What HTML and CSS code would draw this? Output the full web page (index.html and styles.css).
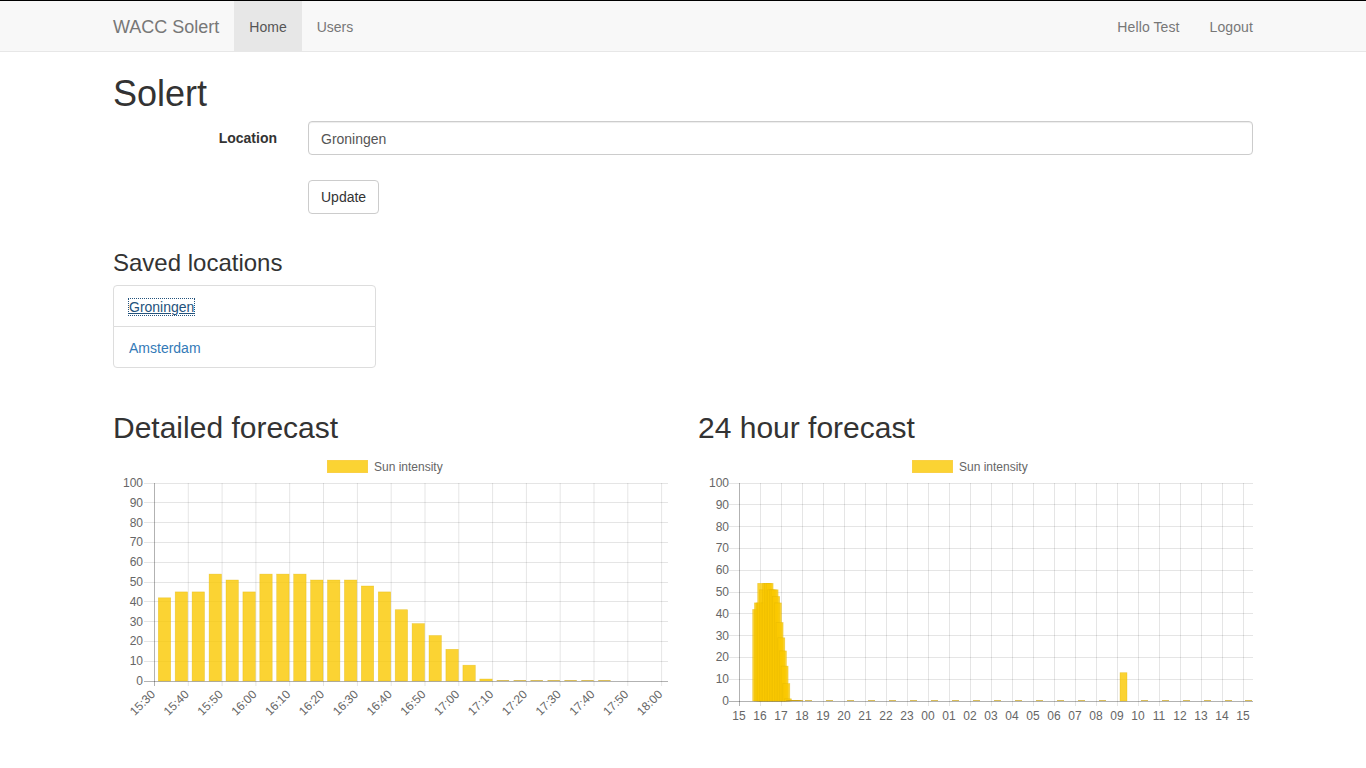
FILE: index.html
```html
<!DOCTYPE html>
<html lang="en">
<head>
<meta charset="utf-8">
<title>Solert</title>
<link rel="stylesheet" href="styles.css">
</head>
<body>
<nav class="navbar">
  <div class="container nav-inner">
    <a class="brand" href="#">WACC Solert</a>
    <ul class="nav">
      <li class="active"><a href="#">Home</a></li>
      <li><a href="#">Users</a></li>
    </ul>
    <ul class="nav nav-right">
      <li><a href="#">Hello Test</a></li>
      <li><a href="#">Logout</a></li>
    </ul>
  </div>
</nav>

<main class="container">
  <h1 class="title">Solert</h1>
  <form class="form">
    <div class="form-row first">
      <label class="label" for="loc">Location</label>
      <input id="loc" class="input" type="text" value="Groningen">
    </div>
    <div class="form-row">
      <div></div>
      <div><button type="button" class="btn">Update</button></div>
    </div>
  </form>

  <h3 class="subtitle">Saved locations</h3>
  <div class="list-group">
    <div class="list-item"><a href="#" class="focused">Groningen</a></div>
    <div class="list-item"><a href="#">Amsterdam</a></div>
  </div>

  <div class="charts">
    <section class="chart-col">
      <h2 class="chart-title">Detailed forecast</h2>
      <svg class="chart" width="555" height="278" viewBox="0 0 555 278">
        <rect class="legend-box" x="214.5" y="6.5" width="40" height="12"/>
        <text x="261" y="17">Sun intensity</text>
        <g class="grid">
          <line x1="31" y1="207.5" x2="555" y2="207.5"/>
          <line x1="31" y1="187.5" x2="555" y2="187.5"/>
          <line x1="31" y1="167.5" x2="555" y2="167.5"/>
          <line x1="31" y1="147.5" x2="555" y2="147.5"/>
          <line x1="31" y1="128.5" x2="555" y2="128.5"/>
          <line x1="31" y1="108.5" x2="555" y2="108.5"/>
          <line x1="31" y1="88.5" x2="555" y2="88.5"/>
          <line x1="31" y1="68.5" x2="555" y2="68.5"/>
          <line x1="31" y1="48.5" x2="555" y2="48.5"/>
          <line x1="31" y1="29.5" x2="555" y2="29.5"/>
          <line x1="75.3" y1="29" x2="75.3" y2="232"/>
          <line x1="109.1" y1="29" x2="109.1" y2="232"/>
          <line x1="142.9" y1="29" x2="142.9" y2="232"/>
          <line x1="176.7" y1="29" x2="176.7" y2="232"/>
          <line x1="210.5" y1="29" x2="210.5" y2="232"/>
          <line x1="244.4" y1="29" x2="244.4" y2="232"/>
          <line x1="278.2" y1="29" x2="278.2" y2="232"/>
          <line x1="312" y1="29" x2="312" y2="232"/>
          <line x1="345.8" y1="29" x2="345.8" y2="232"/>
          <line x1="379.6" y1="29" x2="379.6" y2="232"/>
          <line x1="413.4" y1="29" x2="413.4" y2="232"/>
          <line x1="447.2" y1="29" x2="447.2" y2="232"/>
          <line x1="481" y1="29" x2="481" y2="232"/>
          <line x1="514.8" y1="29" x2="514.8" y2="232"/>
          <line x1="548.6" y1="29" x2="548.6" y2="232"/>
        </g>
        <g class="bars">
          <rect x="45.3" y="143.8" width="12.4" height="83.2"/>
          <rect x="62.2" y="137.9" width="12.4" height="89.1"/>
          <rect x="79.1" y="137.9" width="12.4" height="89.1"/>
          <rect x="96.1" y="120.1" width="12.4" height="106.9"/>
          <rect x="113" y="126" width="12.4" height="101"/>
          <rect x="129.9" y="137.9" width="12.4" height="89.1"/>
          <rect x="146.8" y="120.1" width="12.4" height="106.9"/>
          <rect x="163.7" y="120.1" width="12.4" height="106.9"/>
          <rect x="180.7" y="120.1" width="12.4" height="106.9"/>
          <rect x="197.6" y="126" width="12.4" height="101"/>
          <rect x="214.5" y="126" width="12.4" height="101"/>
          <rect x="231.4" y="126" width="12.4" height="101"/>
          <rect x="248.3" y="132" width="12.4" height="95"/>
          <rect x="265.3" y="137.9" width="12.4" height="89.1"/>
          <rect x="282.2" y="155.7" width="12.4" height="71.3"/>
          <rect x="299.1" y="169.6" width="12.4" height="57.4"/>
          <rect x="316" y="181.5" width="12.4" height="45.5"/>
          <rect x="332.9" y="195.3" width="12.4" height="31.7"/>
          <rect x="349.9" y="211.2" width="12.4" height="15.8"/>
          <rect x="366.8" y="225" width="12.4" height="2"/>
        </g>
        <g class="zeros">
          <rect x="383.7" y="226" width="12.4" height="1"/>
          <rect x="400.6" y="226" width="12.4" height="1"/>
          <rect x="417.5" y="226" width="12.4" height="1"/>
          <rect x="434.5" y="226" width="12.4" height="1"/>
          <rect x="451.4" y="226" width="12.4" height="1"/>
          <rect x="468.3" y="226" width="12.4" height="1"/>
          <rect x="485.2" y="226" width="12.4" height="1"/>
        </g>
        <g class="axis">
          <line x1="41.5" y1="29" x2="41.5" y2="232"/>
          <line x1="31" y1="227.5" x2="555" y2="227.5"/>
        </g>
        <g class="ylabels">
          <text x="30" y="231">0</text>
          <text x="30" y="211.2">10</text>
          <text x="30" y="191.4">20</text>
          <text x="30" y="171.6">30</text>
          <text x="30" y="151.8">40</text>
          <text x="30" y="132">50</text>
          <text x="30" y="112.2">60</text>
          <text x="30" y="92.4">70</text>
          <text x="30" y="72.6">80</text>
          <text x="30" y="52.8">90</text>
          <text x="30" y="33">100</text>
        </g>
        <g class="xlabels-rot">
          <text x="43" y="241" transform="rotate(-45 43 241)">15:30</text>
          <text x="76.8" y="241" transform="rotate(-45 76.8 241)">15:40</text>
          <text x="110.6" y="241" transform="rotate(-45 110.6 241)">15:50</text>
          <text x="144.4" y="241" transform="rotate(-45 144.4 241)">16:00</text>
          <text x="178.2" y="241" transform="rotate(-45 178.2 241)">16:10</text>
          <text x="212" y="241" transform="rotate(-45 212 241)">16:20</text>
          <text x="245.9" y="241" transform="rotate(-45 245.9 241)">16:30</text>
          <text x="279.7" y="241" transform="rotate(-45 279.7 241)">16:40</text>
          <text x="313.5" y="241" transform="rotate(-45 313.5 241)">16:50</text>
          <text x="347.3" y="241" transform="rotate(-45 347.3 241)">17:00</text>
          <text x="381.1" y="241" transform="rotate(-45 381.1 241)">17:10</text>
          <text x="414.9" y="241" transform="rotate(-45 414.9 241)">17:20</text>
          <text x="448.7" y="241" transform="rotate(-45 448.7 241)">17:30</text>
          <text x="482.5" y="241" transform="rotate(-45 482.5 241)">17:40</text>
          <text x="516.3" y="241" transform="rotate(-45 516.3 241)">17:50</text>
          <text x="550.1" y="241" transform="rotate(-45 550.1 241)">18:00</text>
        </g>
      </svg>
    </section>

    <section class="chart-col">
      <h2 class="chart-title">24 hour forecast</h2>
      <svg class="chart" width="555" height="278" viewBox="0 0 555 278">
        <rect class="legend-box" x="214.5" y="6.5" width="40" height="12"/>
        <text x="261" y="17">Sun intensity</text>
        <g class="grid">
          <line x1="31" y1="225.5" x2="555" y2="225.5"/>
          <line x1="31" y1="203.5" x2="555" y2="203.5"/>
          <line x1="31" y1="181.5" x2="555" y2="181.5"/>
          <line x1="31" y1="159.5" x2="555" y2="159.5"/>
          <line x1="31" y1="138.5" x2="555" y2="138.5"/>
          <line x1="31" y1="116.5" x2="555" y2="116.5"/>
          <line x1="31" y1="94.5" x2="555" y2="94.5"/>
          <line x1="31" y1="72.5" x2="555" y2="72.5"/>
          <line x1="31" y1="50.5" x2="555" y2="50.5"/>
          <line x1="31" y1="29.5" x2="555" y2="29.5"/>
          <line x1="62.5" y1="29" x2="62.5" y2="252"/>
          <line x1="83.5" y1="29" x2="83.5" y2="252"/>
          <line x1="104.5" y1="29" x2="104.5" y2="252"/>
          <line x1="125.5" y1="29" x2="125.5" y2="252"/>
          <line x1="146.5" y1="29" x2="146.5" y2="252"/>
          <line x1="167.5" y1="29" x2="167.5" y2="252"/>
          <line x1="188.5" y1="29" x2="188.5" y2="252"/>
          <line x1="209.5" y1="29" x2="209.5" y2="252"/>
          <line x1="230.5" y1="29" x2="230.5" y2="252"/>
          <line x1="251.5" y1="29" x2="251.5" y2="252"/>
          <line x1="272.5" y1="29" x2="272.5" y2="252"/>
          <line x1="293.5" y1="29" x2="293.5" y2="252"/>
          <line x1="314.5" y1="29" x2="314.5" y2="252"/>
          <line x1="335.5" y1="29" x2="335.5" y2="252"/>
          <line x1="356.5" y1="29" x2="356.5" y2="252"/>
          <line x1="377.5" y1="29" x2="377.5" y2="252"/>
          <line x1="398.5" y1="29" x2="398.5" y2="252"/>
          <line x1="419.5" y1="29" x2="419.5" y2="252"/>
          <line x1="440.5" y1="29" x2="440.5" y2="252"/>
          <line x1="461.5" y1="29" x2="461.5" y2="252"/>
          <line x1="482.5" y1="29" x2="482.5" y2="252"/>
          <line x1="503.5" y1="29" x2="503.5" y2="252"/>
          <line x1="524.5" y1="29" x2="524.5" y2="252"/>
          <line x1="545.5" y1="29" x2="545.5" y2="252"/>
        </g>
        <g class="bars">
          <rect x="54.7" y="155.4" width="7" height="91.6"/>
          <rect x="56.4" y="148.9" width="7" height="98.1"/>
          <rect x="58" y="148.9" width="7" height="98.1"/>
          <rect x="59.7" y="129.3" width="7" height="117.7"/>
          <rect x="61.4" y="135.8" width="7" height="111.2"/>
          <rect x="63.1" y="148.9" width="7" height="98.1"/>
          <rect x="64.7" y="129.3" width="7" height="117.7"/>
          <rect x="66.4" y="129.3" width="7" height="117.7"/>
          <rect x="68.1" y="129.3" width="7" height="117.7"/>
          <rect x="69.7" y="135.8" width="7" height="111.2"/>
          <rect x="71.4" y="135.8" width="7" height="111.2"/>
          <rect x="73.1" y="135.8" width="7" height="111.2"/>
          <rect x="74.7" y="142.4" width="7" height="104.6"/>
          <rect x="76.4" y="148.9" width="7" height="98.1"/>
          <rect x="78.1" y="168.5" width="7" height="78.5"/>
          <rect x="79.8" y="183.8" width="7" height="63.2"/>
          <rect x="81.4" y="196.9" width="7" height="50.1"/>
          <rect x="83.1" y="212.1" width="7" height="34.9"/>
          <rect x="84.8" y="229.6" width="7" height="17.4"/>
          <rect x="86.4" y="244.8" width="7" height="2.2"/>
          <rect x="422" y="218.7" width="7" height="28.3"/>
        </g>
        <g class="zeros">
          <rect x="88.1" y="246" width="7" height="1"/>
          <rect x="89.8" y="246" width="7" height="1"/>
          <rect x="91.4" y="246" width="7" height="1"/>
          <rect x="93.1" y="246" width="7" height="1"/>
          <rect x="94.8" y="246" width="7" height="1"/>
          <rect x="96.5" y="246" width="7" height="1"/>
          <rect x="98.1" y="246" width="7" height="1"/>
          <rect x="107" y="246" width="7" height="1"/>
          <rect x="128" y="246" width="7" height="1"/>
          <rect x="149" y="246" width="7" height="1"/>
          <rect x="170" y="246" width="7" height="1"/>
          <rect x="191" y="246" width="7" height="1"/>
          <rect x="212" y="246" width="7" height="1"/>
          <rect x="233" y="246" width="7" height="1"/>
          <rect x="254" y="246" width="7" height="1"/>
          <rect x="275" y="246" width="7" height="1"/>
          <rect x="296" y="246" width="7" height="1"/>
          <rect x="317" y="246" width="7" height="1"/>
          <rect x="338" y="246" width="7" height="1"/>
          <rect x="359" y="246" width="7" height="1"/>
          <rect x="380" y="246" width="7" height="1"/>
          <rect x="401" y="246" width="7" height="1"/>
          <rect x="443" y="246" width="7" height="1"/>
          <rect x="464" y="246" width="7" height="1"/>
          <rect x="485" y="246" width="7" height="1"/>
          <rect x="506" y="246" width="7" height="1"/>
          <rect x="527" y="246" width="7" height="1"/>
          <rect x="547" y="246" width="7" height="1"/>
        </g>
        <g class="axis">
          <line x1="41.5" y1="29" x2="41.5" y2="252"/>
          <line x1="31" y1="247.5" x2="555" y2="247.5"/>
        </g>
        <g class="ylabels">
          <text x="31" y="251">0</text>
          <text x="31" y="229.2">10</text>
          <text x="31" y="207.4">20</text>
          <text x="31" y="185.6">30</text>
          <text x="31" y="163.8">40</text>
          <text x="31" y="142">50</text>
          <text x="31" y="120.2">60</text>
          <text x="31" y="98.4">70</text>
          <text x="31" y="76.6">80</text>
          <text x="31" y="54.8">90</text>
          <text x="31" y="33">100</text>
        </g>
        <g class="xlabels">
          <text x="41" y="266">15</text>
          <text x="62" y="266">16</text>
          <text x="83" y="266">17</text>
          <text x="104" y="266">18</text>
          <text x="125" y="266">19</text>
          <text x="146" y="266">20</text>
          <text x="167" y="266">21</text>
          <text x="188" y="266">22</text>
          <text x="209" y="266">23</text>
          <text x="230" y="266">00</text>
          <text x="251" y="266">01</text>
          <text x="272" y="266">02</text>
          <text x="293" y="266">03</text>
          <text x="314" y="266">04</text>
          <text x="335" y="266">05</text>
          <text x="356" y="266">06</text>
          <text x="377" y="266">07</text>
          <text x="398" y="266">08</text>
          <text x="419" y="266">09</text>
          <text x="440" y="266">10</text>
          <text x="461" y="266">11</text>
          <text x="482" y="266">12</text>
          <text x="503" y="266">13</text>
          <text x="524" y="266">14</text>
          <text x="545" y="266">15</text>
        </g>
      </svg>
    </section>
  </div>
</main>
</body>
</html>
```

FILE: styles.css
```css
* { box-sizing: border-box; }

html, body {
  margin: 0;
  padding: 0;
  background: #fff;
}

body {
  font-family: "Liberation Sans", Arial, sans-serif;
  font-size: 14px;
  line-height: 1.42857;
  color: #333;
}

a { text-decoration: none; }

.container {
  width: 1170px;
  margin: 0 auto;
  padding: 0 15px;
}

/* Navbar */
.navbar {
  background: #f8f8f8;
  border-top: 1px solid #000;
  border-bottom: 1px solid #e7e7e7;
}

.nav-inner {
  display: flex;
  align-items: stretch;
  height: 50px;
}

.brand {
  margin-left: -15px;
  padding: 16px 15px 14px;
  font-size: 18px;
  line-height: 20px;
  color: #777;
}

.nav {
  display: flex;
  list-style: none;
  margin: 0;
  padding: 0;
}

.nav li a {
  display: block;
  height: 100%;
  padding: 16px 15px 14px;
  line-height: 20px;
  color: #777;
}

.nav li.active a {
  background: #e7e7e7;
  color: #555;
}

.nav-right {
  margin-left: auto;
  margin-right: -15px;
}

.nav-right li a {
  letter-spacing: 0.1px;
}

/* Headings */
.title {
  margin: 22px 0 7px;
  font-size: 36px;
  font-weight: 500;
  line-height: 1.1;
}

.subtitle {
  margin: 21px 0 9px;
  font-size: 24px;
  font-weight: 500;
  line-height: 1.1;
}

/* Form */
.form {
  margin: 0;
  display: flow-root;
}

.form-row {
  display: grid;
  grid-template-columns: 165px 1fr;
  column-gap: 30px;
  margin-bottom: 15px;
}

.form-row.first { margin-bottom: 25px; }

.label {
  text-align: right;
  font-weight: bold;
  padding-top: 8px;
  padding-right: 1px;
  line-height: 1.42857;
}

.input {
  display: block;
  width: 100%;
  height: 34px;
  padding: 7px 12px 5px;
  font-family: inherit;
  font-size: 14px;
  line-height: 1.42857;
  color: #555;
  background: #fff;
  border: 1px solid #ccc;
  border-radius: 4px;
  box-shadow: inset 0 1px 1px rgba(0, 0, 0, 0.075);
}

.btn {
  display: inline-block;
  height: 34px;
  padding: 7px 12px 5px;
  font-family: inherit;
  font-size: 14px;
  line-height: 1.42857;
  color: #333;
  background: #fff;
  border: 1px solid #ccc;
  border-radius: 4px;
}

/* List */
.list-group {
  width: 262.5px;
  margin-bottom: 20px;
}

.list-item {
  padding: 12px 15px 8px;
  border: 1px solid #ddd;
  margin-bottom: -1px;
  background: #fff;
}

.list-item:first-child { border-radius: 4px 4px 0 0; }
.list-item:last-child { border-radius: 0 0 4px 4px; margin-bottom: 0; }

.list-item a { color: #337ab7; }

.list-item a.focused {
  color: #23527c;
  text-decoration: underline;
  outline: 1px dotted #23527c;
}

/* Charts */
.charts {
  display: grid;
  grid-template-columns: 1fr 1fr;
  column-gap: 30px;
}

.chart-title {
  margin: 23px 0 10px;
  font-size: 30px;
  font-weight: 500;
  line-height: 1.1;
}

.chart {
  display: block;
}

.chart text {
  font-family: "Liberation Sans", Arial, sans-serif;
  font-size: 12px;
  fill: #666;
}

.legend-box {
  fill: rgba(250, 200, 0, 0.8);
  stroke: rgba(250, 205, 60, 0.9);
  stroke-width: 1;
}

.grid line {
  stroke: rgba(0, 0, 0, 0.1);
  stroke-width: 1;
}

.axis line {
  stroke: rgba(0, 0, 0, 0.3);
  stroke-width: 1;
}

.bars rect {
  fill: rgba(250, 200, 0, 0.8);
  stroke: rgba(225, 180, 0, 0.5);
  stroke-width: 0.6;
}

.zeros rect {
  fill: rgba(200, 160, 20, 0.7);
}

.ylabels text { text-anchor: end; }
.xlabels-rot text { text-anchor: end; }
.xlabels text { text-anchor: middle; }
```
